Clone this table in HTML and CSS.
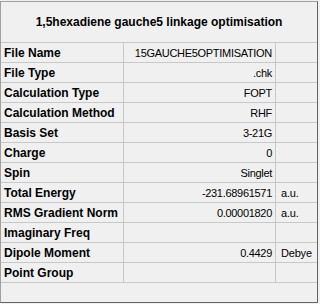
FILE: index.html
```html
<!DOCTYPE html>
<html lang="en">
<head>
    <meta charset="UTF-8">
    <title>Summary</title>
    <link rel="stylesheet" href="styles.css">
</head>
<body>
    <div class="panel">
        <div class="title">1,5hexadiene gauche5 linkage optimisation</div>
        <table class="summary">
            <colgroup>
                <col class="col-label">
                <col class="col-value">
                <col class="col-unit">
            </colgroup>
            <tr><td class="label">File Name</td><td class="value">15GAUCHE5OPTIMISATION</td><td class="unit"></td></tr>
            <tr><td class="label">File Type</td><td class="value">.chk</td><td class="unit"></td></tr>
            <tr><td class="label">Calculation Type</td><td class="value">FOPT</td><td class="unit"></td></tr>
            <tr><td class="label">Calculation Method</td><td class="value">RHF</td><td class="unit"></td></tr>
            <tr><td class="label">Basis Set</td><td class="value">3-21G</td><td class="unit"></td></tr>
            <tr><td class="label">Charge</td><td class="value">0</td><td class="unit"></td></tr>
            <tr><td class="label">Spin</td><td class="value">Singlet</td><td class="unit"></td></tr>
            <tr><td class="label">Total Energy</td><td class="value">-231.68961571</td><td class="unit">a.u.</td></tr>
            <tr><td class="label">RMS Gradient Norm</td><td class="value">0.00001820</td><td class="unit">a.u.</td></tr>
            <tr><td class="label">Imaginary Freq</td><td class="value"></td><td class="unit"></td></tr>
            <tr><td class="label">Dipole Moment</td><td class="value">0.4429</td><td class="unit">Debye</td></tr>
            <tr><td class="label">Point Group</td><td class="value"></td><td class="unit"></td></tr>
        </table>
    </div>
</body>
</html>
```

FILE: styles.css
```css
body {
    margin: 0;
    background: #f0f0f0;
    font-family: 'Liberation Sans', Arial, sans-serif;
    color: #000;
}

.panel {
    box-sizing: border-box;
    width: 318px;
    height: 302px;
    margin-top: 1px;
    background: #f0f0f0;
    border: 1px solid #a0a0a0;
    border-right-color: #646464;
    border-bottom-color: #646464;
}

.title {
    height: 40px;
    line-height: 40px;
    text-align: center;
    font-size: 12px;
    font-weight: bold;
    border-bottom: 1px solid #c8c8c8;
}

.summary {
    width: 316px;
    table-layout: fixed;
    border-collapse: separate;
    border-spacing: 0;
}

.col-label { width: 123px; }
.col-value { width: 152px; }
.col-unit { width: 41px; }

.summary td {
    height: 19px;
    padding: 0;
    border-bottom: 1px solid #c8c8c8;
    white-space: nowrap;
    overflow: hidden;
    vertical-align: middle;
}

.label {
    padding-left: 3px !important;
    font-size: 12px;
    font-weight: bold;
    border-right: 1px solid #c8c8c8;
}

.value {
    padding-right: 3px !important;
    text-align: right;
    font-size: 11px;
    letter-spacing: -0.3px;
    border-right: 1px solid #c8c8c8;
}

.unit {
    padding-left: 5px !important;
    font-size: 11px;
    letter-spacing: -0.2px;
}
```
